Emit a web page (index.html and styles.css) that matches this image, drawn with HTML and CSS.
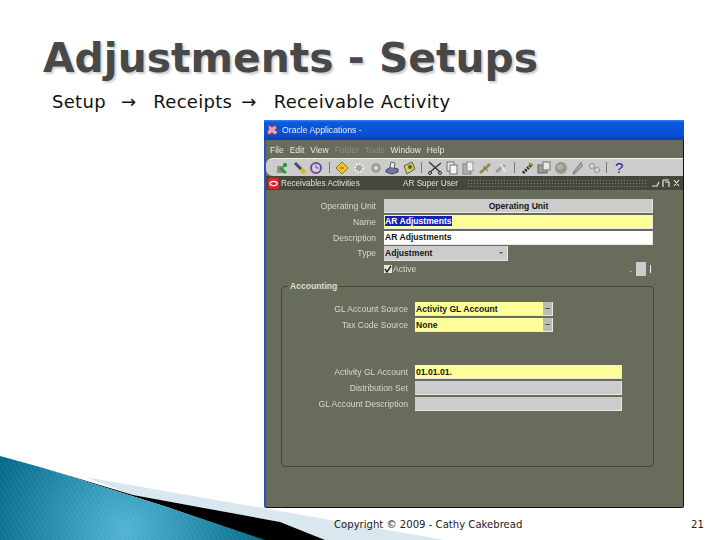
FILE: index.html
```html
<!DOCTYPE html>
<html lang="en">
<head>
  <meta charset="UTF-8" />
  <title>Adjustments - Setups</title>
  <link rel="stylesheet" href="styles.css">
</head>
<body>
  <svg class="swoosh" width="450" height="90" viewBox="0 450 450 90">
    <defs>
      <radialGradient id="teal" gradientUnits="userSpaceOnUse" cx="125" cy="530" r="140">
        <stop offset="0" stop-color="#52b4d2"/>
        <stop offset="0.5" stop-color="#2a90b0"/>
        <stop offset="1" stop-color="#056a8a"/>
      </radialGradient>
      <pattern id="lines" width="4" height="4" patternUnits="userSpaceOnUse" patternTransform="rotate(-30)">
        <rect width="1" height="4" fill="#ffffff" opacity="0.07"/>
      </pattern>
    </defs>
    <polygon points="85,477 445,540 325,540 280,522 133,495" fill="#d9e8ee"/>
    <polygon points="40,467 133,495 280,522 325,540 262,540 167,507" fill="#000"/>
    <polygon points="0,456 40,467 167,507 265,540 0,540" fill="url(#teal)"/>
    <polygon points="0,456 40,467 167,507 265,540 0,540" fill="url(#lines)"/>
  </svg>

  <div class="slide">
    <h1>Adjustments - Setups</h1>
    <p class="path">
      <span>Setup</span><span class="arrow">→</span><span>Receipts</span><span class="arrow tight">→</span><span>Receivable Activity</span>
    </p>

    <div class="window">
      <div class="titlebar">
        <svg width="12" height="12" viewBox="0 0 12 12"><path d="M2 1l3 2 3-2 2 3-2 2 3 2-3 3-3-2-3 2-2-3 2-3-1-2z" fill="#e8a0b0" stroke="#a02040" stroke-width="0.8"/></svg>
        <span>Oracle Applications -</span>
      </div>
      <div class="menubar">
        <span>File</span><span>Edit</span><span>View</span><span class="off">Folder</span><span class="off">Tools</span><span>Window</span><span>Help</span>
      </div>
      <div class="toolbar">
        <svg class="tool" viewBox="0 0 14 14"><rect x="1" y="5" width="7" height="7" fill="#8a8f80"/><path d="M9 2v4M7 4h4M4 7l6 5" stroke="#1f9a3a" stroke-width="2.4" fill="none"/></svg>
        <svg class="tool" viewBox="0 0 14 14"><path d="M2 2l7 7" stroke="#4a4a70" stroke-width="3"/><path d="M8 8l4 4" stroke="#d8b820" stroke-width="4"/></svg>
        <svg class="tool" viewBox="0 0 14 14"><circle cx="7" cy="7" r="5" fill="#d8d0e8" stroke="#70508a" stroke-width="2"/><path d="M7 4v3h3" stroke="#70508a" fill="none"/></svg>
        <i class="sep"></i>
        <svg class="tool" viewBox="0 0 14 14"><path d="M7 1l6 6-6 6-6-6z" fill="#f0c820" stroke="#8a7010"/><path d="M5 7h4" stroke="#8a5010"/></svg>
        <svg class="tool" viewBox="0 0 14 14"><circle cx="7" cy="7" r="4" fill="#a8a89a" stroke="#f0f0e8" stroke-dasharray="2 1" stroke-width="2"/></svg>
        <svg class="tool" viewBox="0 0 14 14"><circle cx="7" cy="7" r="5" fill="#a0a294"/><circle cx="7" cy="7" r="2" fill="#d8d8d0"/></svg>
        <svg class="tool" viewBox="0 0 14 14"><path d="M1 9l5-3 7 2v3l-6 2-6-2z" fill="#7078a0" stroke="#404060"/><path d="M5 6l1-5 4 1-1 5" fill="#f0f0f0" stroke="#606060"/></svg>
        <svg class="tool" viewBox="0 0 14 14"><path d="M2 5l8-4 3 7-8 5z" fill="#d8c860" stroke="#606040"/><circle cx="8" cy="6" r="2" fill="#506050"/></svg>
        <i class="sep"></i>
        <svg class="tool" viewBox="0 0 14 14"><path d="M1 1l11 10M13 2L2 11" stroke="#303030" stroke-width="1.3"/><circle cx="2" cy="12" r="1.5" fill="none" stroke="#303030"/><circle cx="12" cy="12" r="1.5" fill="none" stroke="#303030"/></svg>
        <svg class="tool" viewBox="0 0 14 14"><rect x="2" y="1" width="7" height="9" fill="#e8e8e8" stroke="#707070"/><rect x="5" y="4" width="7" height="9" fill="#f4f4f4" stroke="#707070"/></svg>
        <svg class="tool" viewBox="0 0 14 14"><rect x="2" y="3" width="8" height="10" fill="#b0b0a8" stroke="#808078"/><rect x="6" y="1" width="6" height="9" fill="#f0f0f0" stroke="#909090"/></svg>
        <svg class="tool" viewBox="0 0 14 14"><path d="M2 12l10-9" stroke="#a08a40" stroke-width="3"/><path d="M5 5l5 5" stroke="#606060"/></svg>
        <svg class="tool" viewBox="0 0 14 14"><path d="M2 11l9-7" stroke="#a0a098" stroke-width="3"/><path d="M7 3l4 8" stroke="#e8e8e0" stroke-width="2"/></svg>
        <i class="sep"></i>
        <svg class="tool" viewBox="0 0 14 14"><path d="M2 12l9-9" stroke="#303030" stroke-width="3" stroke-dasharray="2 1"/><path d="M8 2l4 3" stroke="#c09030" stroke-width="2"/></svg>
        <svg class="tool" viewBox="0 0 14 14"><rect x="1" y="4" width="9" height="8" fill="#a0a098" stroke="#606060"/><rect x="6" y="1" width="7" height="8" fill="#e8e8e0" stroke="#707070"/></svg>
        <svg class="tool" viewBox="0 0 14 14"><circle cx="7" cy="7" r="6" fill="#98988e"/><circle cx="6" cy="6" r="3" fill="#b0b0a6"/></svg>
        <svg class="tool" viewBox="0 0 14 14"><path d="M3 12l8-10 1 3-8 8z" fill="none" stroke="#8a8a80" stroke-width="1.4"/></svg>
        <svg class="tool" viewBox="0 0 14 14"><path d="M2 4l4-2 2 4-4 2zM7 8l4-2 2 4-4 2z" fill="#d8d8d0" stroke="#909088"/></svg>
        <i class="sep"></i>
        <span class="help">?</span>
      </div>
      <div class="formbar">
        <svg class="oracle-mark" width="11" height="11" viewBox="0 0 11 11"><rect width="11" height="11" rx="2" fill="#d8282c"/><ellipse cx="5.5" cy="5.5" rx="3.6" ry="2.2" fill="none" stroke="#fff" stroke-width="1.2"/></svg>
        <span class="form-title">Receivables Activities</span>
        <span class="form-user">AR Super User</span>
        <i class="dots"></i>
        <svg class="win-btns" width="30" height="10" viewBox="0 0 30 10"><path d="M1 8h5l2-4M12 2h6M12 2v7M14 4h4v5M23 2l5 6M28 2l-5 6" stroke="#f0f0f0" stroke-width="1.1" fill="none"/></svg>
      </div>

      <div class="form">
        <div class="rows top-rows">
          <label>Operating Unit</label><div class="field readonly center">Operating Unit</div>
          <label>Name</label><div class="field required"><span class="selected">AR Adjustments</span></div>
          <label>Description</label><div class="field plain">AR Adjustments</div>
          <label>Type</label><div class="field readonly short">Adjustment<i class="caret"></i></div>
          <span></span>
          <div class="active-row">
            <svg width="8" height="8" viewBox="0 0 8 8"><rect width="8" height="8" fill="#e8e8e0"/><path d="M1 4l2 3 4-6" stroke="#222" stroke-width="1.4" fill="none"/></svg>
            <span class="active-label">Active</span>
            <i class="spacer"></i><span class="dot">.</span><i class="mini"></i><i class="tick"></i>
          </div>
        </div>

        <fieldset class="group">
          <legend>Accounting</legend>
          <div class="rows source-rows">
            <label>GL Account Source</label><div class="field required combo">Activity GL Account<i class="drop"></i></div>
            <label>Tax Code Source</label><div class="field required combo">None<i class="drop"></i></div>
          </div>
          <div class="rows account-rows">
            <label>Activity GL Account</label><div class="field required wide">01.01.01.</div>
            <label>Distribution Set</label><div class="field readonly wide"></div>
            <label>GL Account Description</label><div class="field readonly wide"></div>
          </div>
        </fieldset>
      </div>
    </div>

    <div class="footer">
      <span class="copyright">Copyright © 2009 - Cathy Cakebread</span>
      <span class="page">21</span>
    </div>
  </div>
</body>
</html>
```

FILE: styles.css
```css
body {
  margin: 0;
  background: #fff;
  font-family: "DejaVu Sans", sans-serif;
}
.swoosh {
  position: absolute;
  left: 0;
  top: 450px;
}
.slide {
  position: relative;
  width: 720px;
  height: 540px;
  overflow: hidden;
}
h1 {
  margin: 0;
  padding: 35px 0 0 43px;
  height: 47px;
  font-size: 40.8px;
  line-height: 47px;
  font-weight: bold;
  color: #484848;
  text-shadow: 2px 2px 2px #cfcfcf;
  white-space: nowrap;
}
.path {
  display: flex;
  margin: 8px 0 0 52px;
  height: 24px;
  font-size: 18px;
  line-height: 24px;
  letter-spacing: 0.3px;
  color: #111;
  white-space: nowrap;
}
.arrow {
  margin: 0 17px 0 15px;
}
.arrow.tight {
  margin: 0 17px 0 9px;
}

/* oracle window */
.window {
  display: flex;
  flex-direction: column;
  width: 420px;
  height: 388px;
  margin: 6px 0 0 264px;
  box-sizing: border-box;
  background: #686c5b;
  border-left: 2px solid #2a52c0;
  border-right: 1px solid #111;
  border-bottom: 1px solid #111;
  border-radius: 0 0 2px 2px;
  font-family: "Liberation Sans", sans-serif;
}
.titlebar {
  display: flex;
  align-items: center;
  gap: 3px;
  height: 20px;
  margin-left: -2px;
  margin-right: -1px;
  padding-left: 3px;
  background: linear-gradient(#3a86f0 0, #0a58e0 12%, #0a50d8 70%, #0840b0 100%);
  color: #e8eef8;
  font-size: 8.7px;
  filter: blur(0.3px);
}
.menubar {
  display: flex;
  gap: 6px;
  height: 18px;
  padding-left: 4px;
  box-sizing: border-box;
  font-size: 8.5px;
  line-height: 20px;
  color: #e8e8e0;
  filter: blur(0.3px);
}
.menubar .off {
  color: #8f9282;
}
.toolbar {
  display: flex;
  align-items: center;
  gap: 2.6px;
  height: 18px;
  padding-left: 10px;
  box-sizing: border-box;
  background: #cccccc;
  border-top: 1px solid #f2f2f2;
  border-radius: 7px 0 0 7px;
}
.tool {
  width: 14px;
  height: 14px;
  flex: none;
  filter: blur(0.25px);
}
.sep {
  width: 1px;
  height: 11px;
  margin: 0 3px;
  background: #777;
}
.help {
  margin-left: 2px;
  font-size: 15px;
  line-height: 16px;
  color: #28288a;
}
.formbar {
  display: flex;
  align-items: center;
  height: 14px;
  background: #45463c;
  color: #e4e4dc;
  font-size: 8.2px;
}
.oracle-mark {
  margin: 0 2px;
  flex: none;
}
.form-title {
  width: 122px;
  white-space: nowrap;
  filter: blur(0.3px);
}
.form-user {
  width: 62px;
  white-space: nowrap;
  filter: blur(0.3px);
}
.dots {
  flex: 1;
  height: 9px;
  margin: 0 5px 0 2px;
  background-image: radial-gradient(circle, #85867a 0.8px, transparent 1px);
  background-size: 3px 3px;
}
.win-btns {
  margin-right: 2px;
  flex: none;
}

/* form */
.form {
  flex: 1;
  padding-top: 9px;
}
.rows {
  display: grid;
  align-items: center;
}
.top-rows {
  grid-template-columns: 110px 269px;
  grid-auto-rows: 14px;
  row-gap: 1.8px;
  column-gap: 8px;
}
label {
  font-size: 8.6px;
  line-height: 14px;
  text-align: right;
  color: #d8d8cc;
  white-space: nowrap;
  filter: blur(0.3px);
}
.field {
  display: flex;
  align-items: center;
  position: relative;
  height: 14px;
  box-sizing: border-box;
  padding-left: 1px;
  font-size: 8.6px;
  font-weight: bold;
  color: #151515;
  white-space: nowrap;
  border-right: 1px solid #e8e8e0;
  border-bottom: 1px solid #e8e8e0;
}
.readonly {
  background: #cccccc;
}
.required {
  background: #ffff99;
}
.plain {
  background: #fff;
}
.center {
  justify-content: center;
}
.short {
  width: 124px;
  height: 15px;
}
.selected {
  background: #1420b8;
  color: #fff;
}
.caret {
  position: absolute;
  right: 4px;
  top: 6px;
  border: 2.5px solid transparent;
  border-top-color: #555;
}
.active-row {
  display: flex;
  align-items: center;
  gap: 1px;
  font-size: 8.6px;
  color: #d8d8cc;
}
.active-label {
  filter: blur(0.3px);
}
.spacer {
  flex: 1;
}
.dot {
  margin-right: 3px;
  color: #f0f0f0;
}
.mini {
  width: 10px;
  height: 14px;
  background: #cccccc;
}
.tick {
  width: 1px;
  height: 8px;
  margin: 0 2px 0 3px;
  background: #f0f0f0;
}

/* accounting box */
.group {
  width: 373px;
  height: 187px;
  box-sizing: border-box;
  margin: 4px 0 0 15px;
  padding: 0;
  border: 1px solid #43473a;
  border-radius: 4px;
  min-width: 0;
}
legend {
  margin-left: 6px;
  padding: 0 2px;
  font-size: 8.6px;
  font-weight: bold;
  line-height: 12px;
  color: #dcdcd0;
}
.source-rows,
.account-rows {
  grid-template-columns: 126px auto;
  grid-auto-rows: 14px;
  row-gap: 2px;
  column-gap: 7px;
  justify-content: start;
}
.source-rows {
  margin-top: 10px;
}
.account-rows {
  margin-top: 33px;
}
.combo {
  width: 138px;
}
.wide {
  width: 207px;
}
.drop {
  position: absolute;
  right: 0;
  top: 0;
  width: 9px;
  height: 13px;
  background: #bcbcb4;
}
.drop::after {
  content: "";
  position: absolute;
  left: 2px;
  top: 6px;
  width: 5px;
  height: 1px;
  background: #555;
}

.footer {
  display: flex;
  margin: 10px 0 0 334px;
  font-size: 10.1px;
  line-height: 13px;
  color: #222;
}
.copyright {
  width: 357px;
  white-space: nowrap;
}
```
